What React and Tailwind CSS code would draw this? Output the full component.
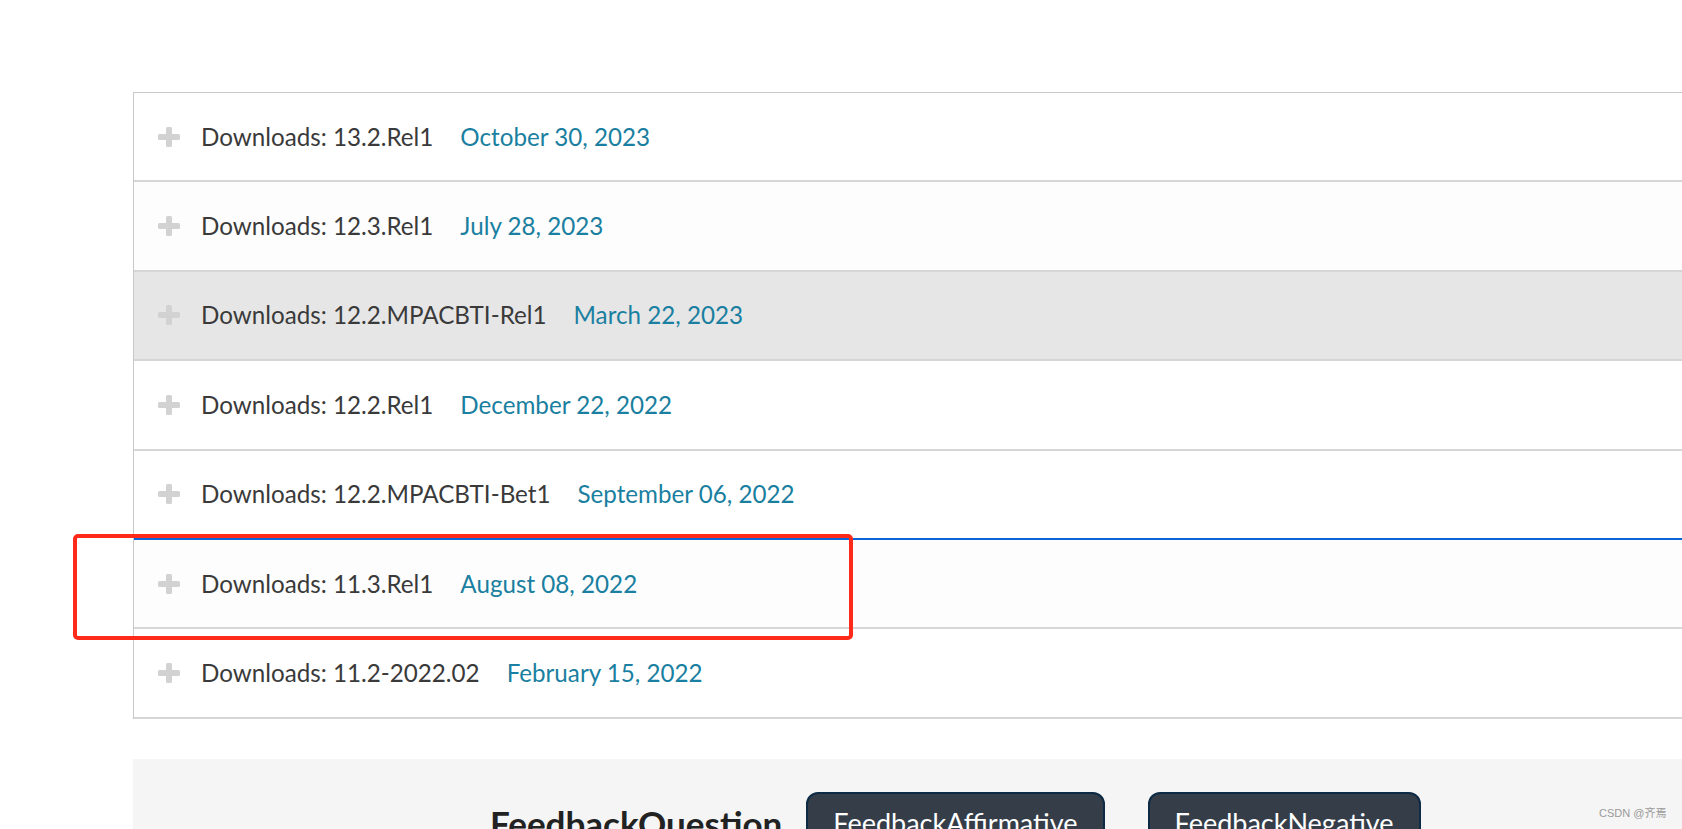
const releases = [
  { name: 'Downloads: 13.2.Rel1', date: 'October 30, 2023', bg: 'bg-white' },
  { name: 'Downloads: 12.3.Rel1', date: 'July 28, 2023', bg: 'bg-[#fdfdfd]' },
  { name: 'Downloads: 12.2.MPACBTI-Rel1', date: 'March 22, 2023', bg: 'bg-[#e6e6e6]' },
  { name: 'Downloads: 12.2.Rel1', date: 'December 22, 2022', bg: 'bg-white' },
  { name: 'Downloads: 12.2.MPACBTI-Bet1', date: 'September 06, 2022', bg: 'bg-white', focused: true },
  { name: 'Downloads: 11.3.Rel1', date: 'August 08, 2022', bg: 'bg-[#fdfdfd]' },
  { name: 'Downloads: 11.2-2022.02', date: 'February 15, 2022', bg: 'bg-white' }
]

function PlusIcon() {
  return (
    <svg width="22" height="20" viewBox="0 0 22 20" className="shrink-0">
      <rect x="8" y="0" width="6" height="20" rx="1.5" fill="#d2d2d2" />
      <rect x="0" y="7" width="22" height="6" rx="1.5" fill="#d2d2d2" />
    </svg>
  )
}

function ReleaseRow({ name, date, bg, focused }) {
  return (
    <div
      className={`h-[89.4px] flex items-center pl-[24px] border-b-2 ${
        focused ? 'border-[#0b65d6]' : 'border-[#d6d6d6]'
      } ${bg}`}
    >
      <PlusIcon />
      <span className="ml-[21px] text-[24.2px] text-[#3a3a3a]">{name}</span>
      <span className="ml-[27px] text-[24.2px] text-[#1a7fa0]">{date}</span>
    </div>
  )
}

export default function App() {
  return (
    <div className="relative w-[1682px] h-[829px] overflow-hidden bg-white font-['Lato',sans-serif]">
      <div className="pt-[92px] pl-[133px]">
        {/* Release accordion */}
        <div className="border-l border-t border-[#c8c8c8]">
          {releases.map(r => (
            <ReleaseRow key={r.name} {...r} />
          ))}
        </div>

        {/* Feedback bar */}
        <div className="mt-[40px] h-[120px] bg-[#f5f5f5] pt-[33px] pl-[357px] flex items-start">
          <h2 className="mt-[10px] text-[35px] font-bold text-[#222222] leading-[1.2]">FeedbackQuestion</h2>
          <button className="ml-[24px] px-[25px] pt-[13px] pb-[13px] bg-[#343d48] border-2 border-[#0e2b45] rounded-[12px] text-white text-[27px] leading-[1.2]">
            FeedbackAffirmative
          </button>
          <button className="ml-[43px] px-[25px] pt-[13px] pb-[13px] bg-[#343d48] border-2 border-[#0e2b45] rounded-[12px] text-white text-[27px] leading-[1.2]">
            FeedbackNegative
          </button>
        </div>
      </div>

      {/* Annotation box */}
      <div className="absolute left-[73px] top-[534px] w-[780px] h-[106px] border-4 border-[#ff2a1a] rounded-[5px]" />

      {/* Watermark */}
      <div className="absolute left-[1599px] top-[805px] text-[11px] text-[#9a9a9a] font-['Liberation_Sans','Noto_Sans_CJK_SC',sans-serif]">
        CSDN @齐焉
      </div>
    </div>
  )
}
